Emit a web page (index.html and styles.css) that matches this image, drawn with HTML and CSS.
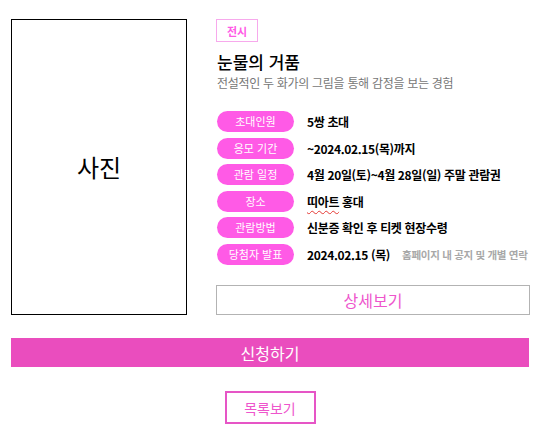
FILE: index.html
```html
<!DOCTYPE html>
<html lang="ko">
<head>
    <meta charset="UTF-8">
    <meta name="viewport" content="width=device-width, initial-scale=1.0">
    <title>이벤트 상세</title>
    <link rel="stylesheet" href="styles.css">
</head>
<body>
    <div class="event">
        <div class="event-top">
            <div class="photo">사진</div>

            <div class="info">
                <span class="tag">전시</span>
                <h1 class="title">눈물의 거품</h1>
                <p class="subtitle">전설적인 두 화가의 그림을 통해 감정을 보는 경험</p>

                <ul class="details">
                    <li class="detail-row">
                        <span class="pill">초대인원</span>
                        <span class="value">5쌍 초대</span>
                    </li>
                    <li class="detail-row">
                        <span class="pill">응모 기간</span>
                        <span class="value">~2024.02.15(목)까지</span>
                    </li>
                    <li class="detail-row">
                        <span class="pill">관람 일정</span>
                        <span class="value">4월 20일(토)~4월 28일(일) 주말 관람권</span>
                    </li>
                    <li class="detail-row">
                        <span class="pill">장소</span>
                        <span class="value"><span class="typo">띠아트</span> 홍대</span>
                    </li>
                    <li class="detail-row">
                        <span class="pill">관람방법</span>
                        <span class="value">신분증 확인 후 티켓 현장수령</span>
                    </li>
                    <li class="detail-row">
                        <span class="pill">당첨자 발표</span>
                        <span class="value">2024.02.15 (목)</span>
                        <span class="note">홈페이지 내 공지 및 개별 연락</span>
                    </li>
                </ul>

                <a href="#" class="detail-button">상세보기</a>
            </div>
        </div>

        <a href="#" class="apply-button">신청하기</a>

        <div class="list-wrap">
            <a href="#" class="list-button">목록보기</a>
        </div>
    </div>
</body>
</html>
```

FILE: styles.css
```css
:root {
    --pink: #ff5ae6;
    --pink-dark: #ea4dbe;
    --pink-text: #ee55cc;
    --gray-text: #777;
}

* {
    box-sizing: border-box;
}

body {
    margin: 0;
    font-family: 'Noto Sans CJK KR', 'Noto Sans', sans-serif;
    color: #000;
    background: #fff;
}

.event {
    width: 530px;
    padding: 19px 0 0 11px;
}

.event-top {
    display: flex;
    gap: 29px;
}

.photo {
    width: 176px;
    height: 296px;
    border: 1px solid #000;
    display: flex;
    align-items: center;
    justify-content: center;
    font-size: 24px;
    line-height: 1;
}

.info {
    width: 314px;
}

.tag {
    display: flex;
    align-items: center;
    justify-content: center;
    width: 42px;
    height: 23px;
    border: 1px solid #f7a9ec;
    color: var(--pink);
    font-size: 11px;
    font-weight: 700;
}

.title {
    margin: 9px 0 0 1px;
    font-size: 17px;
    font-weight: 500;
    line-height: 21px;
}

.subtitle {
    margin: 3px 0 0 1px;
    font-size: 12px;
    line-height: 16px;
    color: var(--gray-text);
    letter-spacing: -0.3px;
}

.details {
    list-style: none;
    margin: 20px 0 0 1px;
    padding: 0;
    display: flex;
    flex-direction: column;
    gap: 5.5px;
}

.detail-row {
    display: flex;
    align-items: center;
    height: 21px;
    white-space: nowrap;
}

.pill {
    flex: none;
    width: 77px;
    height: 21px;
    border-radius: 11px;
    background: var(--pink);
    color: #fff;
    font-size: 11px;
    line-height: 21px;
    text-align: center;
}

.value {
    margin-left: 13px;
    font-size: 12px;
    font-weight: 700;
    letter-spacing: -0.35px;
}

.typo {
    text-decoration: underline wavy #e53935;
    text-decoration-thickness: 1px;
    text-underline-offset: 3px;
}

.note {
    margin-left: 12px;
    font-size: 10.5px;
    font-weight: 700;
    color: #a8a8a8;
    letter-spacing: -0.3px;
}

.detail-button {
    display: flex;
    align-items: center;
    justify-content: center;
    margin-top: 20px;
    height: 30px;
    border: 1px solid #b3b3b3;
    color: var(--pink-text);
    font-size: 16px;
    text-decoration: none;
}

.apply-button {
    display: flex;
    align-items: center;
    justify-content: center;
    margin-top: 23px;
    width: 518px;
    height: 29px;
    background: var(--pink-dark);
    color: #fff;
    font-size: 16px;
    text-decoration: none;
}

.list-wrap {
    display: flex;
    justify-content: center;
    width: 518px;
    margin-top: 24px;
}

.list-button {
    display: flex;
    align-items: center;
    justify-content: center;
    width: 91px;
    height: 33px;
    border: 2px solid #e655c6;
    color: var(--pink-text);
    font-size: 14px;
    text-decoration: none;
}
```
